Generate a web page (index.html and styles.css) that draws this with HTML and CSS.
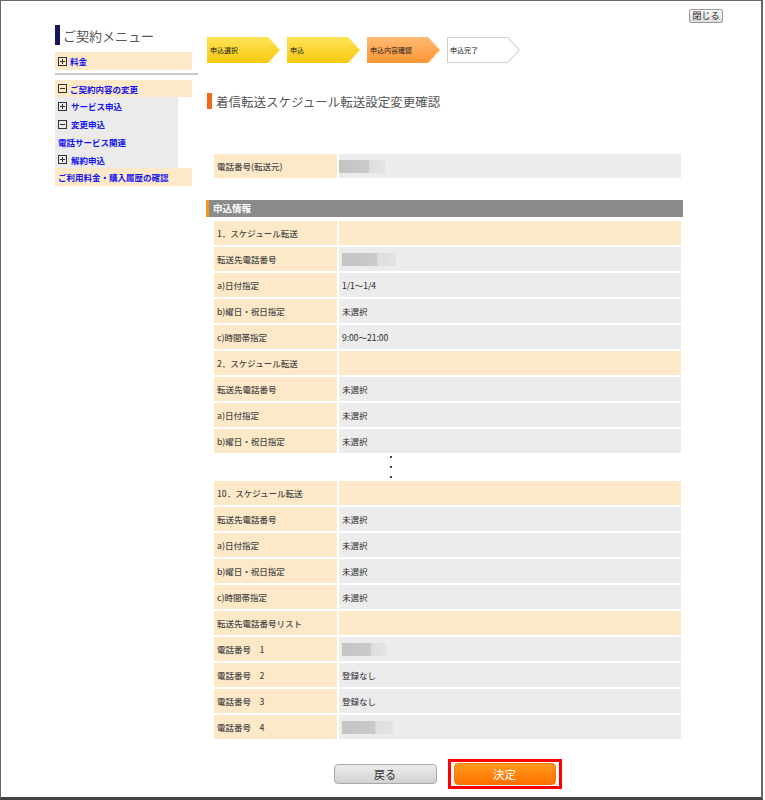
FILE: index.html
```html
<!DOCTYPE html>
<html lang="ja">

<head>
    <meta charset="UTF-8">
    <title>着信転送スケジュール転送設定変更確認</title>
    <link rel="stylesheet" href="styles.css">
</head>

<body>
    <div class="window">
        <div class="topbar">
            <button class="close-btn">閉じる</button>
        </div>
        <div class="layout">
            <div class="sidebar">
                <div class="menu-title"><span class="bar"></span>ご契約メニュー</div>
                <div class="menu-item first">
                    <svg class="ico" width="9" height="9"><rect x="0.5" y="0.5" width="8" height="8" fill="none" stroke="#333"/><path d="M2 4.5h5M4.5 2v5" stroke="#333"/></svg>
                    <a href="#">料金</a>
                </div>
                <div class="menu-rule"></div>
                <div class="menu-item open">
                    <svg class="ico" width="9" height="9"><rect x="0.5" y="0.5" width="8" height="8" fill="none" stroke="#333"/><path d="M2 4.5h5" stroke="#333"/></svg>
                    <a href="#">ご契約内容の変更</a>
                </div>
                <div class="menu-sub">
                    <div class="sub-item">
                        <svg class="ico" width="9" height="9"><rect x="0.5" y="0.5" width="8" height="8" fill="none" stroke="#333"/><path d="M2 4.5h5M4.5 2v5" stroke="#333"/></svg>
                        <a href="#">サービス申込</a>
                    </div>
                    <div class="sub-item">
                        <svg class="ico" width="9" height="9"><rect x="0.5" y="0.5" width="8" height="8" fill="none" stroke="#333"/><path d="M2 4.5h5" stroke="#333"/></svg>
                        <a href="#">変更申込</a>
                    </div>
                    <div class="sub-item plain"><a href="#">電話サービス関連</a></div>
                    <div class="sub-item">
                        <svg class="ico" width="9" height="9"><rect x="0.5" y="0.5" width="8" height="8" fill="none" stroke="#333"/><path d="M2 4.5h5M4.5 2v5" stroke="#333"/></svg>
                        <a href="#">解約申込</a>
                    </div>
                </div>
                <div class="menu-item last"><a href="#">ご利用料金・購入履歴の確認</a></div>
            </div>

            <div class="main">
                <div class="steps">
                    <div class="step done">申込選択</div>
                    <div class="step done">申込</div>
                    <div class="step current">申込内容確認</div>
                    <div class="step todo"><span>申込完了</span></div>
                </div>

                <h1 class="page-title"><span class="bar"></span>着信転送スケジュール転送設定変更確認</h1>

                <div class="table src">
                    <div class="row">
                        <div class="label">電話番号(転送元)</div>
                        <div class="value tight"><span class="blur w46"></span></div>
                    </div>
                </div>

                <div class="section-head">申込情報</div>

                <div class="table">
                    <div class="row group"><div class="label">1．スケジュール転送</div><div class="value"></div></div>
                    <div class="row"><div class="label">転送先電話番号</div><div class="value"><span class="blur w54"></span></div></div>
                    <div class="row"><div class="label">a)日付指定</div><div class="value">1/1～1/4</div></div>
                    <div class="row"><div class="label">b)曜日・祝日指定</div><div class="value">未選択</div></div>
                    <div class="row"><div class="label">c)時間帯指定</div><div class="value">9:00～21:00</div></div>
                    <div class="row group"><div class="label">2．スケジュール転送</div><div class="value"></div></div>
                    <div class="row"><div class="label">転送先電話番号</div><div class="value">未選択</div></div>
                    <div class="row"><div class="label">a)日付指定</div><div class="value">未選択</div></div>
                    <div class="row"><div class="label">b)曜日・祝日指定</div><div class="value">未選択</div></div>
                    <div class="gap-dots"><i></i><i></i><i></i></div>
                    <div class="row group"><div class="label">10．スケジュール転送</div><div class="value"></div></div>
                    <div class="row"><div class="label">転送先電話番号</div><div class="value">未選択</div></div>
                    <div class="row"><div class="label">a)日付指定</div><div class="value">未選択</div></div>
                    <div class="row"><div class="label">b)曜日・祝日指定</div><div class="value">未選択</div></div>
                    <div class="row"><div class="label">c)時間帯指定</div><div class="value">未選択</div></div>
                    <div class="row group"><div class="label">転送先電話番号リスト</div><div class="value"></div></div>
                    <div class="row"><div class="label">電話番号　1</div><div class="value"><span class="blur w44"></span></div></div>
                    <div class="row"><div class="label">電話番号　2</div><div class="value">登録なし</div></div>
                    <div class="row"><div class="label">電話番号　3</div><div class="value">登録なし</div></div>
                    <div class="row"><div class="label">電話番号　4</div><div class="value"><span class="blur w51"></span></div></div>
                </div>

                <div class="actions">
                    <button class="btn back">戻る</button>
                    <div class="focus-box"><button class="btn submit">決定</button></div>
                </div>
            </div>
        </div>
    </div>
</body>

</html>
```

FILE: styles.css
```css
body {
    margin: 0;
    font-family: "Noto Sans CJK JP", "Noto Sans", sans-serif;
    color: #444;
    background: white;
}

.window {
    width: 763px;
    height: 800px;
    box-sizing: border-box;
    border: 1px solid #666;
    border-right-width: 2px;
    border-bottom: 3px solid #444;
    padding-top: 8px;
}

.topbar {
    display: flex;
    justify-content: flex-end;
    padding-right: 38px;
    height: 14px;
}

.close-btn {
    width: 34px;
    height: 14px;
    padding: 0;
    font-family: inherit;
    font-size: 9px;
    line-height: 12px;
    color: #222;
    border: 1px solid #999;
    border-radius: 2px;
    background: linear-gradient(#fafafa, #dcdcdc);
}

.layout {
    display: flex;
    margin-top: 2px;
    padding-left: 54px;
}

/* sidebar */
.sidebar {
    width: 143px;
    flex-shrink: 0;
}

.menu-title {
    display: flex;
    align-items: center;
    height: 20px;
    font-size: 13px;
    color: #555;
}

.menu-title .bar {
    width: 5px;
    height: 20px;
    background: #16165e;
    margin-right: 3px;
}

.menu-item {
    display: flex;
    align-items: center;
    gap: 3px;
    width: 137px;
    height: 18px;
    padding-left: 3px;
    box-sizing: border-box;
    background: #fde9c8;
}

.menu-item.first {
    margin-top: 7px;
}

.menu-item.open {
    margin-top: 5px;
    height: 17px;
}

.menu-rule {
    margin-top: 3px;
    height: 2px;
    background: #c9c9c9;
}

.menu-sub {
    width: 123px;
    background: #ebebeb;
}

.sub-item {
    display: flex;
    align-items: center;
    gap: 4px;
    height: 18px;
    padding-left: 3px;
}

.sub-item:last-child {
    height: 17px;
}

.sidebar a {
    font-size: 8.5px;
    font-weight: bold;
    color: #1414f0;
    text-decoration: none;
    white-space: nowrap;
}

.ico {
    flex-shrink: 0;
}

/* main */
.main {
    width: 477px;
    margin-left: 8px;
}

.steps {
    display: flex;
    gap: 7px;
    margin-top: 12px;
    padding-left: 1px;
}

.step {
    position: relative;
    width: 73px;
    height: 26px;
    padding-left: 3px;
    box-sizing: border-box;
    display: flex;
    align-items: center;
    font-size: 7px;
    color: #222;
    clip-path: polygon(0 0, 61px 0, 73px 13px, 61px 26px, 0 26px);
}

.step.done {
    background: linear-gradient(#fde458, #f8c911);
}

.step.current {
    background: linear-gradient(#ffba74, #ff9534);
}

.step.todo {
    background: #cfcfcf;
}

.step.todo::before {
    content: "";
    position: absolute;
    inset: 0;
    background: white;
    clip-path: polygon(1px 1px, 60.6px 1px, 71.6px 13px, 60.6px 25px, 1px 25px);
}

.step.todo span {
    position: relative;
}

.page-title {
    display: flex;
    align-items: center;
    margin: 30px 0 0 1px;
    height: 16px;
    font-size: 12.5px;
    font-weight: normal;
    color: #555;
}

.page-title .bar {
    width: 5px;
    height: 16px;
    background: #f0681e;
    margin-right: 4px;
}

.table {
    display: flex;
    flex-direction: column;
    gap: 2px;
    width: 467px;
    margin: 4px 0 0 8px;
}

.table.src {
    margin-top: 45px;
}

.row {
    display: flex;
    gap: 2px;
    height: 24px;
    font-size: 8.5px;
}

.label {
    width: 123px;
    flex-shrink: 0;
    display: flex;
    align-items: center;
    padding-left: 3px;
    box-sizing: border-box;
    background: #fde9c8;
    color: #4a4a4a;
    font-weight: 500;
}

.value {
    flex: 1;
    display: flex;
    align-items: center;
    padding-left: 3px;
    background: #ececec;
    color: #2a2a2a;
}

.value.tight {
    padding-left: 0;
}

.row.group .value {
    background: #fde9c8;
}

.blur {
    display: inline-block;
    height: 13px;
    background: linear-gradient(to right, #c4c4c4 0, #cacaca 65%, #dedede 66%, #e4e4e4 100%);
}

.w44 { width: 44px; }
.w46 { width: 46px; }
.w51 { width: 51px; }
.w54 { width: 54px; }

.section-head {
    margin-top: 22px;
    height: 17px;
    line-height: 17px;
    padding-left: 4px;
    border-left: 3px solid #f7941d;
    background: #8b8b8b;
    color: white;
    font-size: 9.5px;
    font-weight: bold;
}

.gap-dots {
    height: 24px;
    display: flex;
    flex-direction: column;
    gap: 8px;
    padding: 1px 0 0 176px;
    box-sizing: border-box;
}

.gap-dots i {
    width: 2px;
    height: 2px;
    background: #444;
}

.actions {
    display: flex;
    justify-content: center;
    align-items: center;
    gap: 11px;
    width: 467px;
    margin: 20px 0 0 8px;
}

.btn {
    font-family: inherit;
    font-size: 11px;
    border-radius: 4px;
    padding: 0;
}

.btn.back {
    width: 103px;
    height: 20px;
    color: #333;
    border: 1px solid #aaa;
    background: linear-gradient(#ececec, #d2d2d2);
}

.focus-box {
    border: 3px solid #f00;
    padding: 1px 3px;
}

.btn.submit {
    display: block;
    width: 102px;
    height: 22px;
    color: white;
    font-size: 11.5px;
    border: 1px solid #f07a00;
    background: linear-gradient(#ff9b1c, #ff6f00);
}
```
